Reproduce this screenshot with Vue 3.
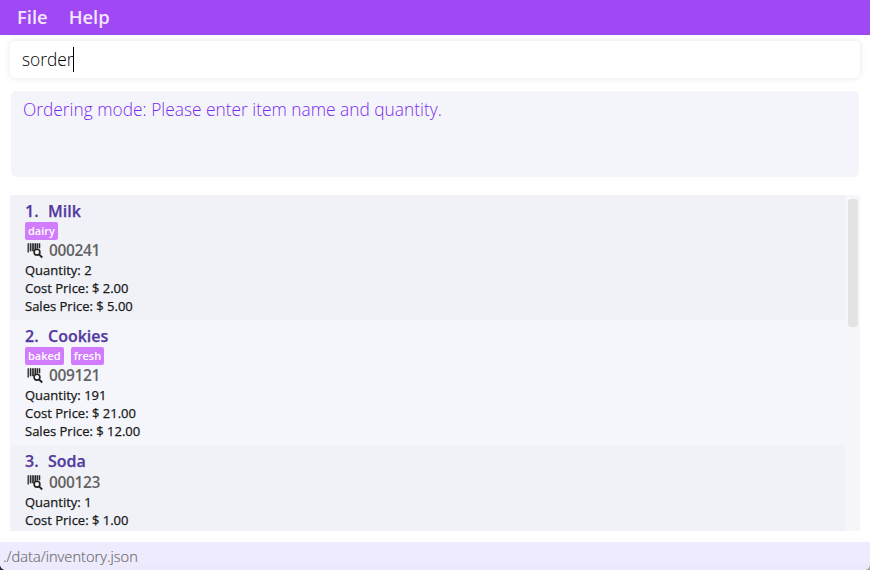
<script setup>
const menus = ['File', 'Help']
const items = [
  { name: 'Milk', tags: ['dairy'], sku: '000241', quantity: 2, cost: '2.00', sales: '5.00' },
  { name: 'Cookies', tags: ['baked', 'fresh'], sku: '009121', quantity: 191, cost: '21.00', sales: '12.00' },
  { name: 'Soda', tags: [], sku: '000123', quantity: 1, cost: '1.00', sales: '' },
]
</script>

<template>
  <div class="window">
    <nav class="menu">
      <span v-for="m in menus" :key="m">{{ m }}</span>
    </nav>
    <div class="command"><span class="typed">sorder</span><i class="caret"></i></div>
    <div class="result"><span>Ordering mode: Please enter item name and quantity.</span></div>
    <div class="list">
      <div class="cells">
        <article v-for="(item, i) in items" :key="item.sku" class="cell">
          <h2><span class="index">{{ i + 1 }}.</span><span>{{ item.name }}</span></h2>
          <div v-if="item.tags.length" class="tags">
            <span v-for="t in item.tags" :key="t" class="tag">{{ t }}</span>
          </div>
          <div class="sku">
            <svg width="16" height="16" viewBox="0 0 16 16" fill="none" stroke="#222">
              <path d="M1.2 0.2v9.3M12.6 0.2v5" stroke-width="1.3" />
              <path d="M3.6 0.2v8M6 0.2v8M8.3 0.2v6M10.5 0.2v5.4" stroke-width="1.65" />
              <circle cx="10" cy="9.2" r="2.9" stroke-width="1.6" />
              <path d="M12 11.3L15.2 14.5" stroke-width="1.9" />
            </svg>
            <span>{{ item.sku }}</span>
          </div>
          <p>Quantity: {{ item.quantity }}</p>
          <p>Cost Price: $ {{ item.cost }}</p>
          <p v-if="item.sales">Sales Price: $ {{ item.sales }}</p>
        </article>
      </div>
      <div class="track"><div class="thumb"></div></div>
    </div>
    <footer class="status"><span>./data/inventory.json</span></footer>
  </div>
</template>

<style>
body { margin: 0; background: #fff; }
</style>

<style scoped>
.window {
  position: relative;
  display: flex;
  flex-direction: column;
  box-sizing: border-box;
  width: 870px;
  height: 570px;
  overflow: hidden;
  background: #fff;
  font-family: "Open Sans", "Noto Sans", sans-serif;
}
.menu {
  display: flex;
  flex: none;
  gap: 21px;
  height: 35px;
  padding-left: 17px;
  background: #9f48f4;
  color: #f3e6fe;
  font-size: 18.4px;
  font-weight: 600;
  line-height: 33px;
}
.command {
  display: flex;
  flex: none;
  align-items: center;
  box-sizing: border-box;
  height: 37px;
  margin: 6px 10px 0;
  padding-left: 12px;
  border-radius: 5px;
  background: #fff;
  box-shadow: 0 0 6px rgba(0, 0, 0, 0.1);
  font-size: 17.33px;
  font-weight: 300;
  color: #000;
}
.typed { padding-bottom: 2px; line-height: 24px; }
.caret { width: 1px; height: 25px; margin-left: -1px; background: #000; }
.result {
  flex: none;
  box-sizing: border-box;
  height: 86px;
  margin: 13px 11px 0;
  padding: 6px 12px;
  border-radius: 5px;
  background: #f4f5fa;
  color: #7c2cf0;
  font-size: 17.33px;
  font-weight: 300;
  line-height: 24px;
}
.list {
  display: flex;
  flex: none;
  height: 336px;
  margin: 18px 10px 0;
  overflow: hidden;
  background: #f7f7fb;
}
.cells { width: 835px; }
.cell {
  box-sizing: border-box;
  height: 125px;
  padding: 5px 15px 0;
  background: #f1f2f7;
}
.cell:nth-child(even) { background: #f5f6fb; }
h2 {
  display: flex;
  margin: 0;
  height: 22px;
  color: #533a9f;
  font-size: 16px;
  font-weight: 600;
  line-height: 22px;
  -webkit-text-stroke: 0.25px;
}
.index { width: 23px; }
.tags { display: flex; gap: 7px; height: 18px; }
.tag {
  padding: 0 3px;
  border-radius: 2px;
  background: #d07cfc;
  color: #fff;
  font-size: 11px;
  font-weight: 600;
  line-height: 18px;
}
.sku {
  display: flex;
  gap: 6px;
  height: 21px;
  padding-left: 2px;
  color: #626262;
  font-size: 15.5px;
  font-weight: 600;
  letter-spacing: -0.35px;
  line-height: 21px;
}
.sku svg { margin-top: 3px; }
p {
  margin: 0;
  height: 18px;
  color: #181818;
  font-size: 13px;
  font-weight: 400;
  line-height: 18px;
  white-space: nowrap;
  -webkit-text-stroke: 0.25px;
}
.track { width: 15px; padding-top: 4px; }
.thumb { width: 10px; height: 128px; margin-left: 3px; border-radius: 3px; background: #e3e3e3; }
.status {
  flex: none;
  height: 28px;
  margin-top: 11px;
  padding-left: 3px;
  background: linear-gradient(#eeebfe 70%, #ebe8fb);
  color: #707070;
  font-size: 14.67px;
  font-weight: 300;
  line-height: 29px;
  -webkit-text-stroke: 0.2px;
}
.window::before,
.window::after {
  content: "";
  position: absolute;
  bottom: 0;
  width: 5px;
  height: 5px;
}
.window::before { left: 0; background: radial-gradient(circle at 100% 0, transparent 4.5px, #302e36 5px); }
.window::after { right: 0; background: radial-gradient(circle at 0 0, transparent 4.5px, #aaa 5px); }
</style>
